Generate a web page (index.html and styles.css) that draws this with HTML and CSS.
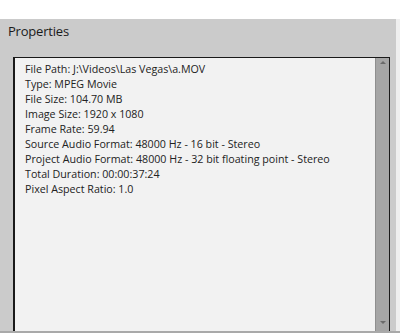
FILE: index.html
```html
<!DOCTYPE html>
<html>
<head>
<meta charset="utf-8">
<link rel="stylesheet" href="styles.css">
</head>
<body>
<div class="top"></div>
<div class="row">
  <div class="panel">
    <div class="title">Properties</div>
    <div class="box">
      <div class="content">
        <div>File Path: J:\Videos\Las Vegas\a.MOV</div>
        <div>Type: MPEG Movie</div>
        <div>File Size: 104.70 MB</div>
        <div>Image Size: 1920 x 1080</div>
        <div>Frame Rate: 59.94</div>
        <div>Source Audio Format: 48000 Hz - 16 bit - Stereo</div>
        <div>Project Audio Format: 48000 Hz - 32 bit floating point - Stereo</div>
        <div>Total Duration: 00:00:37:24</div>
        <div>Pixel Aspect Ratio: 1.0</div>
      </div>
      <div class="scroll">
        <span class="up"></span>
        <span class="down"></span>
      </div>
    </div>
  </div>
  <div class="edge"></div>
</div>
<div class="bottom"></div>
</body>
</html>
```
FILE: styles.css
```css
html, body {
  margin: 0;
  padding: 0;
  width: 400px;
  height: 333px;
  overflow: hidden;
  background: #ffffff;
  font-family: "Open Sans", "Noto Sans", sans-serif;
}
.top {
  height: 19px;
  background: #ffffff;
}
.row {
  display: flex;
  height: 312px;
}
.panel {
  width: 396px;
  background: #cbcbcb;
  display: flex;
  flex-direction: column;
}
.edge {
  flex: 1;
  background: #efefef;
}
.title {
  height: 38px;
  box-sizing: border-box;
  padding: 3px 0 0 8px;
  font-size: 13px;
  letter-spacing: -0.2px;
  color: #1a1a1a;
  line-height: 18px;
}
.box {
  margin-left: 13px;
  width: 377px;
  flex: 1;
  box-sizing: border-box;
  border-top: 1px solid #1a1a1a;
  border-left: 2px solid #1a1a1a;
  border-right: 1px solid #1a1a1a;
  background: #f2f2f2;
  display: flex;
}
.content {
  flex: 1;
  padding: 4px 0 0 10px;
  font-size: 10.7px;
  line-height: 15px;
  color: #222222;
  white-space: nowrap;
}
.scroll {
  width: 13px;
  background: #a6a6a6;
  border-left: 1px solid #8f8f8f;
  position: relative;
}
.up, .down {
  position: absolute;
  left: 4px;
  width: 0;
  height: 0;
  border-left: 3px solid transparent;
  border-right: 3px solid transparent;
}
.up {
  top: 3px;
  border-bottom: 3px solid #6b6b6b;
}
.down {
  bottom: 7px;
  border-top: 3px solid #6b6b6b;
}
.bottom {
  height: 2px;
  background: #a9a9a9;
}
```
